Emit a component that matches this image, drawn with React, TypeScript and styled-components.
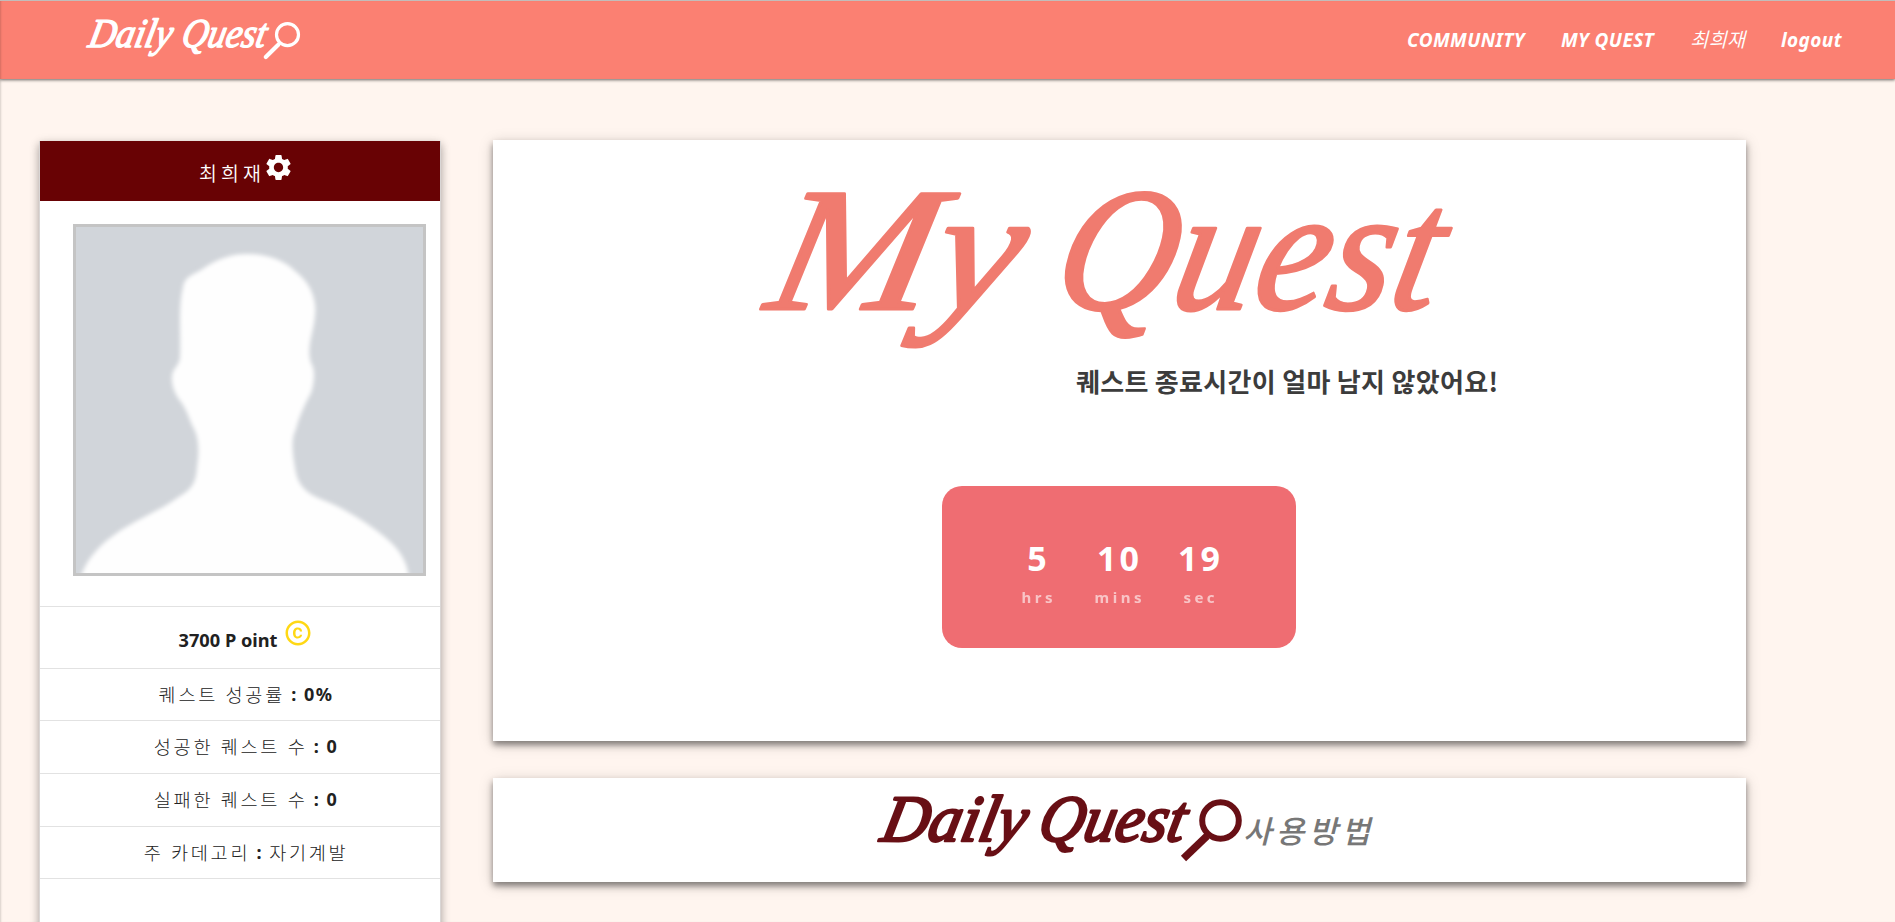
import React from "react";
import styled, { createGlobalStyle } from "styled-components";
import { MdCopyright, MdSettings } from "react-icons/md";

const GlobalStyle = createGlobalStyle`
  *, *::before, *::after { box-sizing: border-box; }
  html, body { margin: 0; padding: 0; height: 100%; overflow: hidden; }
  body {
    background: #fff5ef;
    color: #212121;
    font-family: "Noto Sans", "Noto Sans CJK KR", sans-serif;
    font-size: 18px;
  }
`;

const Page = styled.div`
  height: 922px;
  overflow: hidden;
  box-shadow: inset 2px 0 2px -1px rgba(0, 0, 0, 0.15);
`;

const Header = styled.header`
  display: flex;
  justify-content: space-between;
  height: 79px;
  padding: 0 54px 0 84px;
  background: #fb8072;
  border-top: 1px solid #c2bdbb;
  box-shadow: 0 1px 3px rgba(0, 0, 0, 0.6), inset 2px 0 2px -1px rgba(0, 0, 0, 0.15);
`;

const HeaderLogo = styled.svg`
  width: 222px;
  height: 60px;
  margin-top: 7px;
`;

const Nav = styled.nav`
  display: flex;
  gap: 36px;
  height: 78px;
  align-items: center;
`;

const NavLink = styled.a<{ $width: number; $light?: boolean }>`
  width: ${(p) => p.$width}px;
  color: #fff;
  font-style: italic;
  font-weight: ${(p) => (p.$light ? 350 : 700)};
  font-size: ${(p) => (p.$light ? 20 : 19)}px;
  letter-spacing: ${(p) => (p.$light ? 0 : 0.4)}px;
  line-height: 26px;
  white-space: nowrap;
`;

const Content = styled.div`
  display: flex;
  align-items: flex-start;
  padding: 61px 0 0 39px;
`;

const Sidebar = styled.aside`
  width: 402px;
  height: 860px;
  margin-top: 1px;
  background: #fff;
  border: solid #d9d6d5;
  border-width: 0 1px;
  box-shadow: 0 4px 8px rgba(0, 0, 0, 0.22), 0 2px 10px rgba(0, 0, 0, 0.16);
`;

const SidebarTitle = styled.div`
  display: flex;
  justify-content: center;
  height: 60px;
  padding: 11px 0 0 13px;
  background: #680204;
  color: #fff;
  font-weight: 350;
  font-size: 19.5px;
  line-height: 43px;
  letter-spacing: 4.1px;

  svg { margin-left: -2px; }
`;

const AvatarFrame = styled.div`
  width: 353px;
  height: 352px;
  margin: 23px 0 30px 33px;
  border: 3px solid #c4c4c4;
  background: #d1d5da;
  overflow: hidden;

  svg { display: block; }
`;

const StatRow = styled.div<{ $height?: number }>`
  display: flex;
  justify-content: center;
  height: ${(p) => p.$height ?? 52.7}px;
  padding: 8px 0 0 12px;
  border-top: 1px solid #e2e2e2;
  line-height: 35px;
  letter-spacing: 1.5px;
  font-weight: 700;
  white-space: pre;
`;

const Points = styled.span`
  margin: 8px 6px 0 0;
  font-size: 18.2px;
  letter-spacing: 0;
`;

const Coin = styled(MdCopyright)`
  margin-top: 3px;
  color: #ffd814;
`;

const StatLabel = styled.span`
  font-weight: 300;
  font-size: 18.6px;
  letter-spacing: 2.7px;
`;

const Main = styled.main`
  width: 1253px;
  margin-left: 52px;
`;

const Card = styled.section<{ $height: number }>`
  display: flex;
  flex-direction: column;
  align-items: center;
  height: ${(p) => p.$height}px;
  margin-bottom: 37px;
  background: #fff;
  box-shadow: 0 4px 6px rgba(0, 0, 0, 0.42), 0 3px 14px rgba(0, 0, 0, 0.18);
`;

const Banner = styled.svg`
  flex: none;
  width: 780px;
  height: 300px;
`;

const Timer = styled.div`
  display: flex;
  width: 354px;
  height: 162px;
  margin: 46px 1px 0 0;
  padding: 48px 0 0 72px;
  border-radius: 20px;
  background: #ef6d72;
  color: #fff;
  font-weight: 700;
`;

const TimeUnit = styled.div<{ $width: number }>`
  display: flex;
  flex-direction: column;
  align-items: center;
  width: ${(p) => p.$width}px;
`;

const TimeValue = styled.span`
  font-size: 34px;
  line-height: 48px;
  letter-spacing: 3px;
  margin-right: -3px;
`;

const TimeLabel = styled.span`
  font-size: 15px;
  line-height: 30px;
  letter-spacing: 3.5px;
  margin-right: -3.5px;
  opacity: 0.6;
`;

const GuideLogo = styled.svg`
  width: 520px;
  height: 104px;
`;

const ScriptText = styled.text`
  font-family: "Liberation Serif", serif;
  font-style: italic;
  stroke-linejoin: round;
`;

interface ScriptProps {
  x: number;
  y: number;
  size: number;
  length: number;
  children: string;
}

function Script({ x, y, size, length, children }: ScriptProps) {
  return (
    <ScriptText
      transform={`translate(${x} ${y}) skewX(-12)`}
      fontSize={size}
      textLength={length}
      lengthAdjust="spacingAndGlyphs"
    >
      {children}
    </ScriptText>
  );
}

const Korean = styled.text`
  font-family: "Noto Sans CJK KR", sans-serif;
`;

const stats = [
  { label: "퀘스트 성공률", value: "0%" },
  { label: "성공한 퀘스트 수", value: "0" },
  { label: "실패한 퀘스트 수", value: "0" },
];

function Avatar() {
  return (
    <svg width="347" height="346" viewBox="0 0 347 346">
      <defs>
        <filter id="soft" x="-5%" y="-5%" width="110%" height="110%">
          <feGaussianBlur stdDeviation="2" />
        </filter>
      </defs>
      <path
        filter="url(#soft)"
        fill="#fefefe"
        d="M4 352 C8 338 18 322 38 308 C60 292 84 284 104 269 C118 261 120 253 121 240 C124 220 122 208 116 198 C112 188 110 182 105 175 C99 168 95 158 96 149 C96 142 104 138 104 130 C105 105 102 80 107 60 C108 50 118 47 125 43 C140 32 157 26 173 27 C191 27 210 34 219 44 C234 55 241 72 239 88 C238 105 230 120 235 136 C240 143 238 157 235 166 C229 177 223 190 220 202 C214 213 217 230 220 246 C223 261 234 268 247 273 C268 281 292 296 310 311 C326 324 332 338 333 352 Z"
      />
    </svg>
  );
}

export default function App() {
  return (
    <Page>
      <GlobalStyle />
      <Header>
        <HeaderLogo viewBox="84 8 222 60" fill="#fff">
          <g stroke="#fff" strokeWidth="1.4">
            <Script x={87} y={47} size={41} length={83}>Daily</Script>
            <Script x={180} y={47} size={41} length={84}>Quest</Script>
          </g>
          <circle cx="287.5" cy="34.7" r="11" fill="none" stroke="#fff" strokeWidth="3.2" />
          <path d="M278.5 44.5 L265.8 57" stroke="#fff" strokeWidth="4.2" strokeLinecap="round" />
        </HeaderLogo>
        <Nav>
          <NavLink $width={118}>COMMUNITY</NavLink>
          <NavLink $width={93}>MY QUEST</NavLink>
          <NavLink $width={55} $light>최희재</NavLink>
          <NavLink $width={60}>logout</NavLink>
        </Nav>
      </Header>
      <Content>
        <Sidebar>
          <SidebarTitle>
            최희재
            <MdSettings size={31} />
          </SidebarTitle>
          <AvatarFrame>
            <Avatar />
          </AvatarFrame>
          <StatRow $height={61.5}>
            <Points>3700 P oint</Points>
            <Coin size={30} />
          </StatRow>
          {stats.map((s) => (
            <StatRow key={s.label}>
              <StatLabel>{s.label}</StatLabel> : {s.value}
            </StatRow>
          ))}
          <StatRow>
            <StatLabel>주 카데고리</StatLabel> : <StatLabel>자기계발</StatLabel>
          </StatRow>
          <StatRow />
        </Sidebar>
        <Main>
          <Card $height={601}>
            <Banner viewBox="729 140 780 300">
              <g fill="#f07b6f" stroke="#f07b6f" strokeWidth="3">
                <Script x={762} y={309} size={176} length={250}>My</Script>
                <Script x={1048} y={309} size={176} length={382}>Quest</Script>
              </g>
              <Korean x="1075" y="392" fontSize="26" fontWeight="700" fill="#3c3c3c" textLength="422" lengthAdjust="spacing">
                퀘스트 종료시간이 얼마 남지 않았어요!
              </Korean>
            </Banner>
            <Timer>
              <TimeUnit $width={46}>
                <TimeValue>5</TimeValue>
                <TimeLabel>hrs</TimeLabel>
              </TimeUnit>
              <TimeUnit $width={116}>
                <TimeValue>10</TimeValue>
                <TimeLabel>mins</TimeLabel>
              </TimeUnit>
              <TimeUnit $width={46}>
                <TimeValue>19</TimeValue>
                <TimeLabel>sec</TimeLabel>
              </TimeUnit>
            </Timer>
          </Card>
          <Card $height={104}>
            <GuideLogo viewBox="859 778 520 104" fill="#680f15">
              <g stroke="#680f15" strokeWidth="2.6">
                <Script x={878} y={841} size={66} length={144}>Daily</Script>
                <Script x={1035} y={841} size={66} length={146}>Quest</Script>
              </g>
              <circle cx="1219.5" cy="820.5" r="18.3" fill="none" stroke="#680f15" strokeWidth="6" />
              <path d="M1206 836 L1182.5 858.5" stroke="#680f15" strokeWidth="7.5" />
              <Korean x="1242" y="843" fontSize="31" fontWeight="500" fill="#777" textLength="127" lengthAdjust="spacing" fontStyle="italic">사용방법</Korean>
            </GuideLogo>
          </Card>
        </Main>
      </Content>
    </Page>
  );
}
